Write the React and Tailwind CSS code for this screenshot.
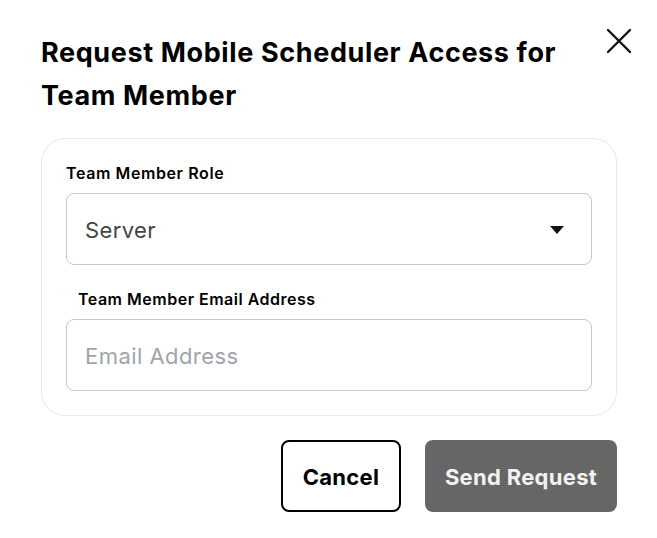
export default function App() {
  return (
    <div className="w-[657px] h-[538px] bg-white relative" style={{ fontFamily: "Inter, 'Noto Sans', sans-serif" }}>
      <button className="absolute left-[603px] top-[25px] w-[32px] h-[32px] flex items-center justify-center">
        <svg width="26" height="26" viewBox="0 0 26 26" fill="none" stroke="#111" strokeWidth="2.4" strokeLinecap="round">
          <path d="M2 2 L24 24 M24 2 L2 24" />
        </svg>
      </button>
      <div className="pt-[31px] pl-[41px] pr-[40px]">
        <h1 className="text-[27px] leading-[43px] font-bold text-black tracking-[0.62px] w-[540px]">
          Request Mobile Scheduler Access for Team Member
        </h1>
        <div className="mt-[21px] border border-[#e8e8e8] rounded-[24px] px-[24px] pt-[24px] pb-[24px]">
          <label className="block text-[16px] leading-[20px] font-semibold text-black tracking-[0.6px] mb-[10px]">Team Member Role</label>
          <div className="h-[72px] border border-[#c8c8c8] rounded-[8px] flex items-center justify-between pl-[18px] pr-[27px] pt-[2px]">
            <span className="text-[22px] text-[#444] tracking-[0.4px]">Server</span>
            <svg width="14" height="8" viewBox="0 0 14 8"><path d="M0 0 H14 L7 8 Z" fill="#111" /></svg>
          </div>
          <label className="block text-[16px] leading-[20px] font-semibold text-black tracking-[0.5px] mt-[24px] mb-[10px] pl-[12px]">Team Member Email Address</label>
          <div className="h-[72px] border border-[#c8c8c8] rounded-[8px] flex items-center pl-[18px] pt-[2px]">
            <span className="text-[22px] text-[#a0a4ad] tracking-[0.45px]">Email Address</span>
          </div>
        </div>
        <div className="flex justify-end gap-[24px] mt-[24px]">
          <button className="w-[120px] h-[72px] border-2 border-black rounded-[8px] text-[22px] font-bold text-black tracking-[0.3px] pt-[2px]">Cancel</button>
          <button className="w-[192px] h-[72px] bg-[#666666] rounded-[8px] text-[22px] font-bold text-[#f2f2f2] tracking-[0.3px] pt-[2px]">Send Request</button>
        </div>
      </div>
    </div>
  );
}
